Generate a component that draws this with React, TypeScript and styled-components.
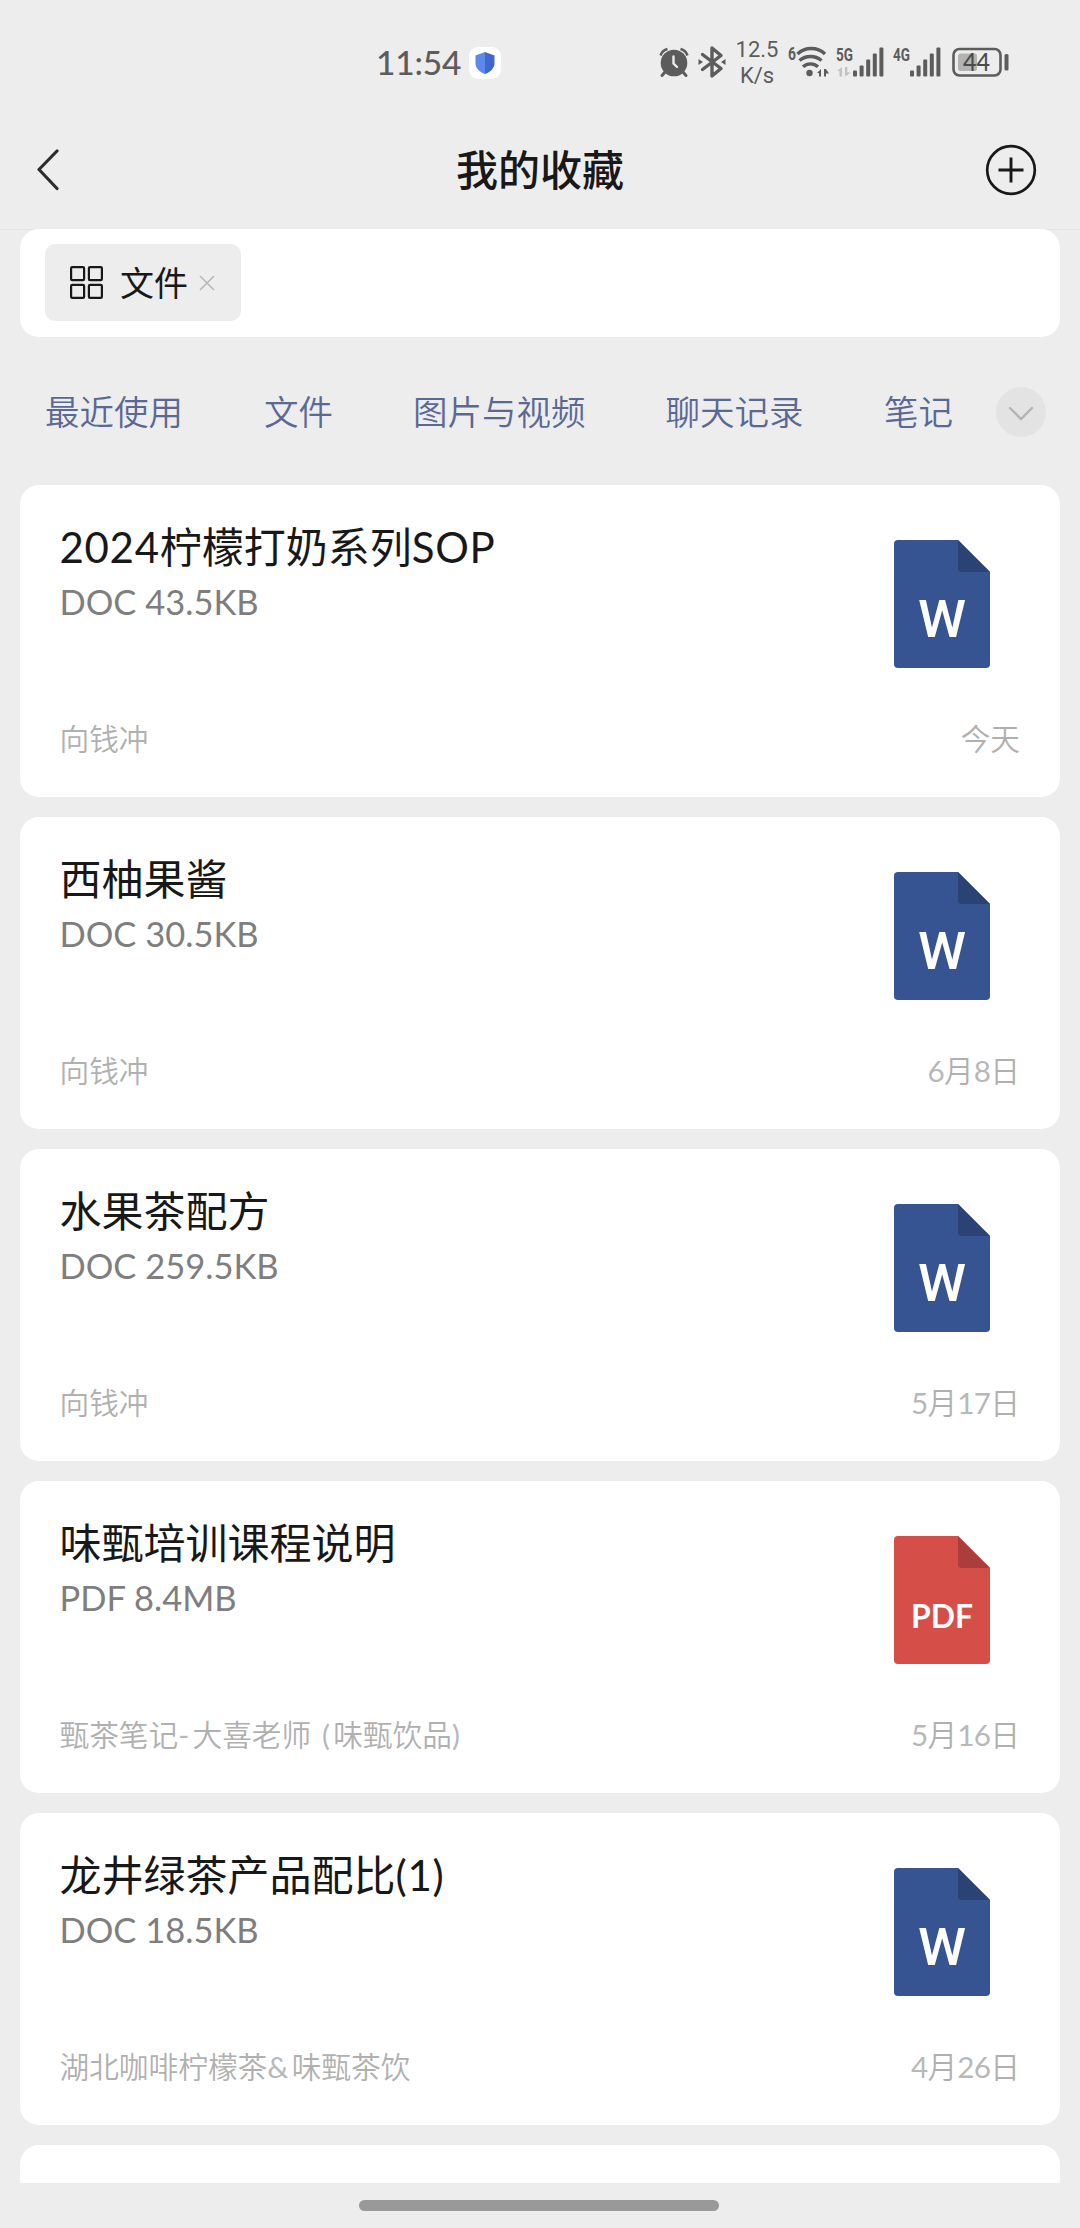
import React from 'react';
import styled, { createGlobalStyle } from 'styled-components';

const GlobalStyle = createGlobalStyle`
  * { box-sizing: border-box; }
  body {
    margin: 0;
    background: #ededed;
    font-family: Lato, "Noto Sans CJK SC", sans-serif;
    color: #181818;
  }
`;

const Screen = styled.div`
  display: flex;
  flex-direction: column;
  width: 1080px;
  height: 2228px;
  overflow: hidden;
  background: #ededed;
`;

const StatusBar = styled.div`
  display: flex;
  align-items: center;
  flex: none;
  height: 124px;
  padding-left: 376px;
  color: #5c5c5c;
`;

const Clock = styled.span`
  width: 93px;
  font-size: 33.5px;
  font-weight: 500;
  line-height: 40px;
  letter-spacing: -0.2px;
  white-space: nowrap;
`;

const ShieldBadge = styled.span`
  display: grid;
  place-items: center;
  width: 32px;
  height: 32px;
  margin-top: 2px;
  border-radius: 9px;
  background: #fff;
`;

const StatusIcons = styled.div`
  display: flex;
  align-items: center;
  margin-left: 158px;

  svg {
    flex: none;
    display: block;
    overflow: visible;
  }
`;

const Speed = styled.div`
  display: flex;
  flex-direction: column;
  align-items: center;
  width: 48px;
  margin: 1px 6.5px 0 7px;
  font-family: Roboto, sans-serif;
  font-size: 22px;
  line-height: 26px;
`;

const Spacer = styled.span<{ $w: number }>`
  flex: none;
  width: ${(p) => p.$w}px;
`;

const Header = styled.header`
  display: grid;
  grid-template-columns: 66px 1fr 66px;
  align-items: center;
  flex: none;
  height: 105px;
  padding: 0 43px 14px 43px;
`;

const Title = styled.h1`
  margin: 0;
  text-align: center;
  font-size: 42px;
  font-weight: 500;
  line-height: 60px;
`;

const IconButton = styled.button<{ $end?: boolean }>`
  display: flex;
  justify-content: ${(p) => (p.$end ? 'flex-end' : 'flex-start')};
  margin-left: ${(p) => (p.$end ? 0 : -14)}px;
  padding: 0;
  border: 0;
  background: none;
`;

const SearchArea = styled.div`
  flex: none;
  padding: 0 20px;
  background: linear-gradient(#e3e3e3 1px, transparent 1px);
`;

const SearchBox = styled.div`
  display: flex;
  height: 108px;
  padding: 15px 25px;
  border-radius: 19px;
  background: #fff;
`;

const Chip = styled.div`
  display: flex;
  align-items: center;
  width: 196px;
  height: 77px;
  padding-left: 25px;
  border-radius: 10px;
  background: #ededed;
`;

const ChipLabel = styled.span`
  margin: 0 11px 0 17px;
  font-size: 34px;
  line-height: 48px;
`;

const Tabs = styled.nav`
  display: flex;
  align-items: center;
  flex: none;
  height: 148px;
  padding-left: 45px;
`;

const Tab = styled.a<{ $gap: number }>`
  margin-right: ${(p) => p.$gap}px;
  padding-top: 1px;
  font-size: 34.5px;
  font-weight: 350;
  line-height: 50px;
  color: #5a6896;
  white-space: nowrap;
`;

const More = styled.button`
  display: grid;
  place-items: center;
  width: 50px;
  height: 50px;
  margin-top: 1px;
  padding: 2px 0 0;
  border: 0;
  border-radius: 50%;
  background: #e3e3e3;
`;

const List = styled.main`
  display: flex;
  flex-direction: column;
  gap: 20px;
  flex: none;
  height: 1698px;
  padding: 0 20px;
  overflow: hidden;
`;

const Card = styled.article`
  display: flex;
  flex-direction: column;
  justify-content: space-between;
  flex: none;
  height: 312px;
  padding: 32px 40px 36px 39.5px;
  border-radius: 19px;
  background: #fff;
`;

const CardBody = styled.div`
  display: flex;
  justify-content: space-between;
  padding-right: 30px;
`;

const Name = styled.h2`
  margin: 0;
  font-size: 42px;
  font-weight: 400;
  line-height: 60px;
`;

const Latin = styled.span<{ $ls: number }>`
  letter-spacing: ${(p) => p.$ls}px;
`;

const Meta = styled.p`
  margin: 0;
  font-size: 34.5px;
  font-weight: 400;
  line-height: 50px;
  color: #7e7e7e;
`;

const FileIcon = styled.svg`
  display: block;
  flex: none;
  margin-top: 23px;
`;

const CardFoot = styled.div`
  display: flex;
  justify-content: space-between;
  font-size: 29.7px;
  font-weight: 350;
  line-height: 44px;
  color: #b0b0b0;

  ${Latin} {
    font-weight: 400;
    color: #b8b8b8;
  }
`;

const HomeArea = styled.div`
  display: flex;
  justify-content: center;
  flex: 1;
  padding: 17px 2px 0 0;
`;

const HomeBar = styled.div`
  width: 360px;
  height: 11px;
  border-radius: 6px;
  background: #999;
`;

type Kind = 'W' | 'PDF';

/* Mixed-script line: tracks the Latin runs separately from the Chinese ones. */
const Mixed = ({ text, ls }: { text: string; ls: number }) => (
  <span>
    {text.split(/([\x20-\x7e]+)/).map((run, i) =>
      i % 2 ? (
        <Latin key={i} $ls={ls}>
          {run}
        </Latin>
      ) : (
        run
      ),
    )}
  </span>
);

const DocIcon = ({ kind }: { kind: Kind }) => {
  const word = kind === 'W';
  return (
    <FileIcon width="96" height="128" viewBox="0 0 96 128">
      <path
        d="M4 0H64L96 32V124a4 4 0 0 1-4 4H4a4 4 0 0 1-4-4V4a4 4 0 0 1 4-4z"
        fill={word ? '#365392' : '#d64e48'}
      />
      <path d="M64 0L96 32H68a4 4 0 0 1-4-4z" fill={word ? '#2b4274' : '#ab3e3a'} />
      <text
        x="48"
        y={word ? 97 : 91.5}
        textAnchor="middle"
        fill="#fff"
        fontFamily={word ? 'Roboto, sans-serif' : 'Lato, sans-serif'}
        fontWeight={word ? 500 : 700}
        fontSize={word ? 51 : 33}
        textLength={word ? 48 : 62}
        lengthAdjust="spacingAndGlyphs"
      >
        {kind}
      </text>
    </FileIcon>
  );
};

const Signal = ({ label, faded }: { label: string; faded?: boolean }) => (
  <svg width="48" height="30" viewBox="0 0 48 30" fill="#5c5c5c">
    <text
      x="-1"
      y="13.5"
      fontFamily="Roboto, sans-serif"
      fontWeight="700"
      fontSize="18"
      textLength="17"
      lengthAdjust="spacingAndGlyphs"
    >
      {label}
    </text>
    {faded && <path d="M5 20v9.500H2.500v-5.500H0zM8 29.500V20h2.300v5.500H14z" fill="#c2c2c2" />}
    {[6, 11, 17, 23, 29].map((h, i) => (
      <rect key={h} x={16 + i * 6.6} y={29.5 - h} width="4" height={h} rx="1" />
    ))}
  </svg>
);

const files: { name: string; meta: string; from: string; date: string; kind: Kind }[] = [
  { name: '2024柠檬打奶系列SOP', meta: 'DOC 43.5KB', from: '向钱冲', date: '今天', kind: 'W' },
  { name: '西柚果酱', meta: 'DOC 30.5KB', from: '向钱冲', date: '6月8日', kind: 'W' },
  { name: '水果茶配方', meta: 'DOC 259.5KB', from: '向钱冲', date: '5月17日', kind: 'W' },
  { name: '味甄培训课程说明', meta: 'PDF 8.4MB', from: '甄茶笔记-大喜老师 (味甄饮品)', date: '5月16日', kind: 'PDF' },
  { name: '龙井绿茶产品配比(1)', meta: 'DOC 18.5KB', from: '湖北咖啡柠檬茶&味甄茶饮', date: '4月26日', kind: 'W' },
];

const tabs: [string, number][] = [
  ['最近使用', 81],
  ['文件', 80],
  ['图片与视频', 80],
  ['聊天记录', 80.5],
  ['笔记', 42.5],
];

export default function App() {
  return (
    <Screen>
      <GlobalStyle />
      <StatusBar>
        <Clock>11:54</Clock>
        <ShieldBadge>
          <svg width="20" height="22" viewBox="0 0 20 22">
            <path d="M10 0L19.500 3.500V11c0 5.500-4 9-9.500 11z" fill="#3f68cf" />
            <path d="M10 0L.5 3.500V11c0 5.500 4 9 9.500 11z" fill="#5b8aec" />
          </svg>
        </ShieldBadge>
        <StatusIcons>
          <svg width="30" height="30" viewBox="0 0 30 30" fill="#5c5c5c">
            <circle cx="15" cy="16" r="13.300" />
            <path
              d="M1.500 8.500a10 10 0 0 1 7-6.500M28.500 8.500a10 10 0 0 0-7-6.500"
              fill="none"
              stroke="#5c5c5c"
              strokeWidth="2.600"
            />
            <path d="M6 25l-3 3.500M24 25l3 3.500" stroke="#5c5c5c" strokeWidth="3" strokeLinecap="round" />
            <path d="M14.500 9.500v7l3.500 3.500" fill="none" stroke="#ededed" strokeWidth="2.400" strokeLinecap="round" />
          </svg>
          <Spacer $w={9} />
          <svg width="28" height="32" viewBox="0 0 28 32">
            <path
              d="M4.500 8.500L23 22.500 14 30V2l9 7.500L4.500 23.500"
              fill="none"
              stroke="#5c5c5c"
              strokeWidth="3.400"
              strokeLinejoin="round"
              strokeLinecap="round"
            />
            <path d="M.5 13v6l4.500-3zM27.500 13v6L23 16z" fill="#5c5c5c" />
          </svg>
          <Speed>
            <span>12.5</span>
            <span>K/s</span>
          </Speed>
          <svg width="42" height="30" viewBox="0 0 42 30" fill="#5c5c5c">
            <text
              x="0"
              y="12.5"
              fontFamily="Roboto, sans-serif"
              fontWeight="700"
              fontSize="18"
              textLength="8"
              lengthAdjust="spacingAndGlyphs"
            >
              6
            </text>
            <g fill="none" stroke="#5c5c5c" strokeWidth="3.400">
              <path d="M9.500 7a20 20 0 0 1 27.500 0" />
              <path d="M11.500 13.500a17 17 0 0 1 22 0" />
              <path d="M15 19.800a11 11 0 0 1 15 0" />
            </g>
            <circle cx="21.500" cy="26" r="3.200" />
            <path d="M33 22v7.500h-2V26h-2zM36 29.500V22h2l3 4.500h-3v3z" />
          </svg>
          <Spacer $w={7} />
          <Signal label="5G" faded />
          <Spacer $w={9} />
          <Signal label="4G" />
          <Spacer $w={10} />
          <svg width="56" height="30" viewBox="0 0 56 30">
            <rect x="1.500" y="2" width="47" height="26.500" rx="6" fill="none" stroke="#5c5c5c" strokeWidth="2.600" />
            <rect x="6" y="6.500" width="19" height="17.500" rx="2.500" fill="#b3b3b3" />
            <rect x="52.500" y="7" width="4" height="16.500" rx="1.500" fill="#5c5c5c" />
            <text
              x="24.500"
              y="24"
              textAnchor="middle"
              fontFamily="Lato, sans-serif"
              fontWeight="500"
              fontSize="24.500"
              fill="#4a4a4a"
              textLength="27"
              lengthAdjust="spacingAndGlyphs"
            >
              44
            </text>
          </svg>
        </StatusIcons>
      </StatusBar>

      <Header>
        <IconButton aria-label="返回">
          <svg width="30" height="44" viewBox="0 0 30 44">
            <path
              d="M28 3L10 21.500l18 19"
              fill="none"
              stroke="#2c2c2c"
              strokeWidth="3.200"
              strokeLinecap="round"
              strokeLinejoin="round"
            />
          </svg>
        </IconButton>
        <Title>我的收藏</Title>
        <IconButton $end aria-label="添加">
          <svg width="52" height="52" viewBox="0 0 52 52" fill="none" stroke="#181818">
            <circle cx="26" cy="26" r="23.800" strokeWidth="2.700" />
            <path d="M13.500 26h25M26 13.500v25" strokeWidth="2.900" />
          </svg>
        </IconButton>
      </Header>

      <SearchArea>
        <SearchBox>
          <Chip>
            <svg width="33" height="33" viewBox="0 0 33 33" fill="none" stroke="#181818" strokeWidth="2.200">
              <rect x="1.100" y="1.100" width="13" height="13" rx="1.200" />
              <rect x="18.900" y="1.100" width="13" height="13" rx="1.200" />
              <rect x="1.100" y="18.900" width="13" height="13" rx="1.200" />
              <rect x="18.900" y="18.900" width="13" height="13" rx="1.200" />
            </svg>
            <ChipLabel>文件</ChipLabel>
            <svg width="16" height="16" viewBox="0 0 16 16" stroke="#b8b8b8" strokeWidth="1.600">
              <path d="M1 1l14 14M15 1L1 15" />
            </svg>
          </Chip>
        </SearchBox>
      </SearchArea>

      <Tabs>
        {tabs.map(([label, gap]) => (
          <Tab key={label} $gap={gap}>
            {label}
          </Tab>
        ))}
        <More aria-label="更多">
          <svg width="26" height="16" viewBox="0 0 26 16">
            <path d="M2 3l11 11L24 3" fill="none" stroke="#b4b4b4" strokeWidth="2.400" strokeLinecap="round" />
          </svg>
        </More>
      </Tabs>

      <List>
        {files.map((f) => (
          <Card key={f.name}>
            <CardBody>
              <div>
                <Name>
                  <Mixed text={f.name} ls={0.7} />
                </Name>
                <Meta>{f.meta}</Meta>
              </div>
              <DocIcon kind={f.kind} />
            </CardBody>
            <CardFoot>
              <Mixed text={f.from} ls={3.2} />
              <Mixed text={f.date} ls={-0.7} />
            </CardFoot>
          </Card>
        ))}
        <Card />
      </List>

      <HomeArea>
        <HomeBar />
      </HomeArea>
    </Screen>
  );
}
